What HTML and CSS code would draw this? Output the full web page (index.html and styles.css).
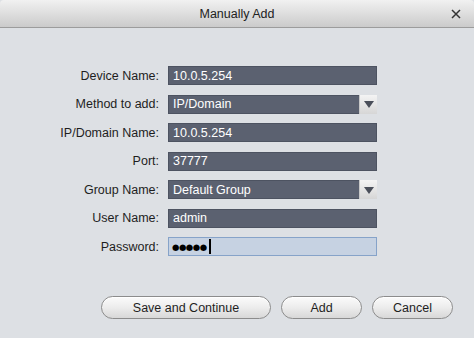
FILE: index.html
```html
<!DOCTYPE html>
<html lang="en">
<head>
    <meta charset="UTF-8">
    <title>Manually Add</title>
    <link rel="stylesheet" href="styles.css">
</head>
<body>
    <div class="dialog">
        <div class="title-bar">
            <span class="title">Manually Add</span>
            <span class="close">
                <svg width="10" height="10" viewBox="0 0 10 10">
                    <path d="M1 1 L9 9 M9 1 L1 9" stroke="#333" stroke-width="1.5"/>
                </svg>
            </span>
        </div>

        <div class="form">
            <label>Device Name:</label>
            <div class="field">10.0.5.254</div>

            <label>Method to add:</label>
            <div class="field select">
                <span>IP/Domain</span>
                <span class="arrow"></span>
            </div>

            <label>IP/Domain Name:</label>
            <div class="field">10.0.5.254</div>

            <label>Port:</label>
            <div class="field">37777</div>

            <label>Group Name:</label>
            <div class="field select">
                <span>Default Group</span>
                <span class="arrow"></span>
            </div>

            <label>User Name:</label>
            <div class="field">admin</div>

            <label>Password:</label>
            <div class="field focus"><span class="dots">●●●●●</span><span class="caret"></span></div>
        </div>

        <div class="buttons">
            <button class="btn btn-wide">Save and Continue</button>
            <button class="btn">Add</button>
            <button class="btn">Cancel</button>
        </div>
    </div>
</body>
</html>
```

FILE: styles.css
```css
body {
    margin: 0;
    padding: 0;
    font-family: 'Liberation Sans', Arial, sans-serif;
    background-color: #dde0e4;
}

.dialog {
    width: 474px;
    height: 338px;
    background-color: #dde0e4;
    display: flex;
    flex-direction: column;
}

.title-bar {
    height: 27px;
    border-bottom: 1px solid #9c9c9c;
    background: linear-gradient(to bottom, #f1f1f1 0%, #dcdcdc 55%, #cbcbcb 100%);
    display: flex;
    align-items: center;
    justify-content: center;
    position: relative;
    border-radius: 4px 4px 0 0;
}

.title {
    font-size: 12.5px;
    color: #222;
}

.close {
    position: absolute;
    right: 13px;
    top: 9px;
    line-height: 0;
}

.form {
    display: grid;
    grid-template-columns: 159px 209px;
    column-gap: 9px;
    row-gap: 9.5px;
    grid-auto-rows: 19px;
    margin-top: 38px;
}

label {
    font-size: 12.5px;
    color: #1e1e1e;
    text-align: right;
    display: flex;
    align-items: center;
    justify-content: flex-end;
}

.field {
    background-color: #5b6170;
    border: 1px solid #4d5361;
    color: #ffffff;
    font-size: 12.5px;
    display: flex;
    align-items: center;
    padding-left: 4px;
    box-sizing: border-box;
}

.select {
    padding-right: 0;
    justify-content: space-between;
}

.arrow {
    width: 18px;
    height: 19px;
    margin-right: -1px;
    background: linear-gradient(to bottom, #f4f4f4 0%, #d6d6d6 100%);
    border-left: 1px solid #c8c8c8;
    box-sizing: border-box;
    display: flex;
    align-items: center;
    justify-content: center;
}

.arrow::after {
    content: '';
    border-left: 5px solid transparent;
    border-right: 5px solid transparent;
    border-top: 7px solid #4a4f5a;
    margin-top: 1px;
}

.focus {
    background-color: #c6d2e2;
    border: 1px solid #86a3c9;
    color: #000;
    padding-left: 3px;
}

.dots {
    font-family: 'DejaVu Sans', sans-serif;
    font-size: 8.5px;
    letter-spacing: -0.5px;
}

.caret {
    width: 2px;
    height: 15px;
    background-color: #000;
    margin-left: 2px;
}

.buttons {
    display: flex;
    justify-content: flex-end;
    gap: 10px;
    padding-right: 21px;
    margin-top: 40px;
}

.btn {
    width: 81px;
    height: 23px;
    border: 1px solid #8c8c8c;
    border-radius: 12px;
    background: linear-gradient(to bottom, #fbfbfb 0%, #ececec 50%, #d8d8d8 100%);
    font-family: 'Liberation Sans', Arial, sans-serif;
    font-size: 12.5px;
    color: #1e1e1e;
    padding: 0;
    box-shadow: inset 0 1px 0 #ffffff;
}

.btn-wide {
    width: 170px;
}
```
